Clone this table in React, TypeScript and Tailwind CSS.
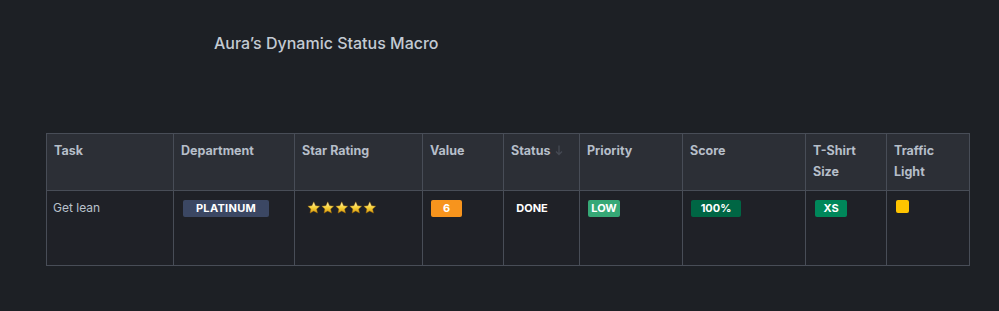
import React from "react";

type Col = { label: React.ReactNode; width: string };

const cols: Col[] = [
  { label: "Task", width: "w-[127px]" },
  { label: "Department", width: "w-[121px]" },
  { label: "Star Rating", width: "w-[128px]" },
  { label: "Value", width: "w-[81px]" },
  {
    label: (
      <span className="inline-flex items-center gap-[5px]">
        Status
        <svg width="8" height="11" viewBox="0 0 8 11" className="text-[#454a53]">
          <path d="M4 0.5v9M1 6.5l3 3 3-3" stroke="currentColor" strokeWidth="1.3" fill="none" />
        </svg>
      </span>
    ),
    width: "w-[76px]",
  },
  { label: "Priority", width: "w-[103px]" },
  { label: "Score", width: "w-[123px]" },
  { label: <>T-Shirt<br />Size</>, width: "w-[81px]" },
  { label: <>Traffic<br />Light</>, width: "w-[83px]" },
];

const Badge = ({ children, className }: { children: React.ReactNode; className: string }) => (
  <span
    className={
      "inline-flex h-[17px] items-center justify-center rounded-[2px] text-[11px] font-bold leading-none text-white " +
      className
    }
  >
    {children}
  </span>
);

const Star = () => (
  <svg width="13.5" height="13.5" viewBox="0 0 24 24">
    <defs>
      <linearGradient id="sg" x1="0" y1="0" x2="0" y2="1">
        <stop offset="0" stopColor="#fff8c4" />
        <stop offset="0.5" stopColor="#f8d33a" />
        <stop offset="1" stopColor="#d99a10" />
      </linearGradient>
    </defs>
    <path
      d="M12 1.5l3.2 6.9 7.3.8-5.4 5 1.5 7.3L12 17.8l-6.6 3.7 1.5-7.3-5.4-5 7.3-.8z"
      fill="url(#sg)"
      stroke="#a8730a"
      strokeWidth="0.8"
    />
  </svg>
);

export default function App() {
  return (
    <div className="min-h-[311px] bg-[#1d2025] font-['Inter',sans-serif] text-[#c7d1db]">
      <div className="pl-[214px] pt-[33px] text-[16px] font-medium leading-[20px] text-[#c3cad3]">
        Aura’s Dynamic Status Macro
      </div>
      <div className="pl-[46px] pt-[80px]">
        <table className="table-fixed border-collapse border border-[#484d57] text-[12px]">
          <thead>
            <tr className="h-[57px] bg-[#2c2f36]">
              {cols.map((c, i) => (
                <th
                  key={i}
                  className={
                    c.width +
                    " border border-[#484d57] px-[7px] pt-[6px] pb-[6px] align-top text-left text-[12.5px] font-bold leading-[21px] text-[#b6bec9]"
                  }
                >
                  {c.label}
                </th>
              ))}
            </tr>
          </thead>
          <tbody>
            <tr className="h-[75px] bg-[#1f2127]">
              <td className="border border-[#484d57] px-[6px] pt-[8px] align-top leading-[17px] text-[#b9c1cc]">
                Get lean
              </td>
              <td className="border border-[#484d57] pl-[9px] pt-[8px] align-top">
                <Badge className="w-[86px] bg-[#3b4763] tracking-[0.3px] text-[#e6ebf2]">PLATINUM</Badge>
              </td>
              <td className="border border-[#484d57] pl-[12px] pt-[8px] align-top">
                <span className="flex h-[17px] items-center gap-[0.5px]">
                  <Star />
                  <Star />
                  <Star />
                  <Star />
                  <Star />
                </span>
              </td>
              <td className="border border-[#484d57] pl-[8px] pt-[8px] align-top">
                <Badge className="w-[31px] bg-[#f7941d]">6</Badge>
              </td>
              <td className="border border-[#484d57] pl-[12px] pt-[8px] align-top">
                <Badge className="w-[32px] bg-transparent">DONE</Badge>
              </td>
              <td className="border border-[#484d57] pl-[8px] pt-[8px] align-top">
                <Badge className="w-[32px] bg-[#36a876] text-[#e8f7ef]">LOW</Badge>
              </td>
              <td className="border border-[#484d57] pl-[8px] pt-[8px] align-top">
                <Badge className="w-[50px] bg-[#006644] text-[#e3efe9]">100%</Badge>
              </td>
              <td className="border border-[#484d57] pl-[9px] pt-[8px] align-top">
                <Badge className="w-[32px] bg-[#00875a]">XS</Badge>
              </td>
              <td className="border border-[#484d57] pl-[9px] pt-[9px] align-top">
                <span className="block h-[13px] w-[13px] rounded-[2px] bg-[#ffc400]" />
              </td>
            </tr>
          </tbody>
        </table>
      </div>
    </div>
  );
}
